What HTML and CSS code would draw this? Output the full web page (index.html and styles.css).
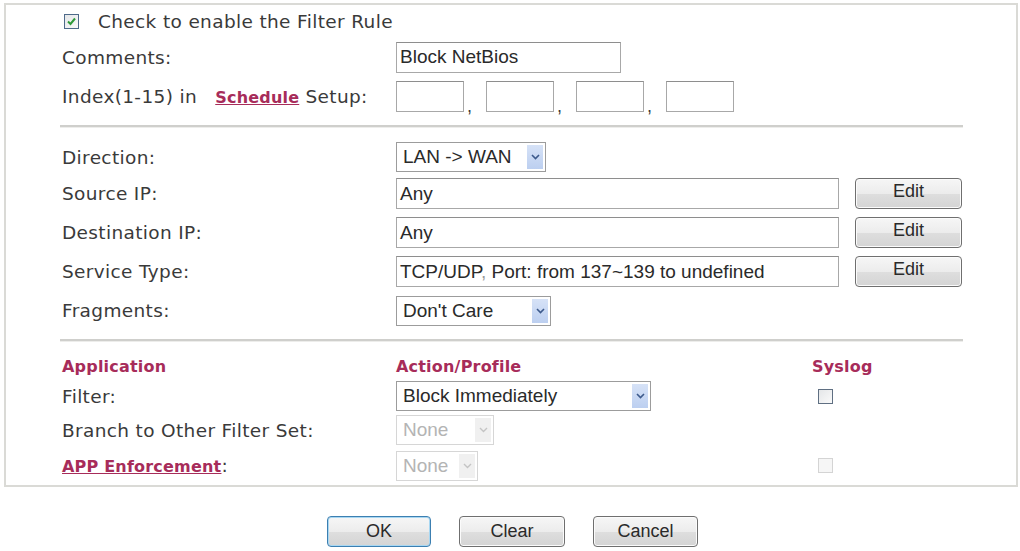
FILE: index.html
```html
<!DOCTYPE html>
<html lang="en">
  <head>
    <meta charset="UTF-8" />
    <title>Filter Rule</title>
    <link rel="stylesheet" href="styles.css">
  </head>
  <body>
    <div class="panel">
      <!-- enable + comments + schedule -->
      <div class="row row-check">
        <span class="checkbox checked">
          <svg width="11" height="11" viewBox="0 0 11 11"><path d="M2 5.5 L4.5 8 L9 2.5" fill="none" stroke="#2f9a3a" stroke-width="2"/></svg>
        </span>
        <span class="check-text">Check to enable the Filter Rule</span>
      </div>
      <div class="row row-comments">
        <div class="label">Comments:</div>
        <div class="field comments"><span>Block NetBios</span></div>
      </div>
      <div class="row row-index">
        <div class="label">Index(1-15) in <a class="link sched" href="#">Schedule</a> Setup:</div>
        <div class="index-set">
          <span class="field idx"></span><span class="comma">,</span>
          <span class="field idx"></span><span class="comma">,</span>
          <span class="field idx"></span><span class="comma">,</span>
          <span class="field idx"></span>
        </div>
      </div>

      <div class="sep sep-top"></div>

      <!-- rule matching -->
      <div class="row row-dir">
        <div class="label">Direction:</div>
        <div class="select sel-dir">
          <span class="sel-text">LAN -&gt; WAN</span>
          <span class="arrow"><svg width="9" height="6" viewBox="0 0 9 6"><path d="M1 1 L4.5 4.5 L8 1" fill="none" stroke="#3d5a8c" stroke-width="1.6"/></svg></span>
        </div>
      </div>
      <div class="row row-ip">
        <div class="label">Source IP:</div>
        <div class="field wide"><span>Any</span></div>
        <button class="btn edit">Edit</button>
      </div>
      <div class="row row-ip">
        <div class="label">Destination IP:</div>
        <div class="field wide"><span>Any</span></div>
        <button class="btn edit">Edit</button>
      </div>
      <div class="row row-ip">
        <div class="label">Service Type:</div>
        <div class="field wide"><span>TCP/UDP<span class="faint">,</span> Port: from 137~139 to undefined</span></div>
        <button class="btn edit">Edit</button>
      </div>
      <div class="row row-ip">
        <div class="label">Fragments:</div>
        <div class="select sel-frag">
          <span class="sel-text">Don't Care</span>
          <span class="arrow"><svg width="9" height="6" viewBox="0 0 9 6"><path d="M1 1 L4.5 4.5 L8 1" fill="none" stroke="#3d5a8c" stroke-width="1.6"/></svg></span>
        </div>
      </div>

      <div class="sep sep-bottom"></div>

      <!-- action -->
      <div class="row row-head">
        <div class="label head">Application</div>
        <div class="col-action head">Action/Profile</div>
        <div class="head">Syslog</div>
      </div>
      <div class="row row-filter">
        <div class="label">Filter:</div>
        <div class="col-action">
          <div class="select sel-action">
            <span class="sel-text">Block Immediately</span>
            <span class="arrow"><svg width="9" height="6" viewBox="0 0 9 6"><path d="M1 1 L4.5 4.5 L8 1" fill="none" stroke="#3d5a8c" stroke-width="1.6"/></svg></span>
          </div>
        </div>
        <span class="checkbox syslog"></span>
      </div>
      <div class="row row-branch">
        <div class="label">Branch to Other Filter Set:</div>
        <div class="col-action">
          <div class="select disabled sel-branch">
            <span class="sel-text">None</span>
            <span class="arrow"><svg width="9" height="6" viewBox="0 0 9 6"><path d="M1 1 L4.5 4.5 L8 1" fill="none" stroke="#c4c4c4" stroke-width="1.4"/></svg></span>
          </div>
        </div>
      </div>
      <div class="row row-app">
        <div class="label"><a class="link" href="#">APP Enforcement</a>:</div>
        <div class="col-action">
          <div class="select disabled sel-app">
            <span class="sel-text">None</span>
            <span class="arrow"><svg width="9" height="6" viewBox="0 0 9 6"><path d="M1 1 L4.5 4.5 L8 1" fill="none" stroke="#c4c4c4" stroke-width="1.4"/></svg></span>
          </div>
        </div>
        <span class="checkbox syslog disabled"></span>
      </div>
    </div>

    <div class="actions">
      <button class="btn big ok">OK</button>
      <button class="btn big clear">Clear</button>
      <button class="btn big cancel">Cancel</button>
    </div>
  </body>
</html>
```

FILE: styles.css
```css
* {
  box-sizing: border-box;
}

body {
  margin: 0;
  background: #fff;
  font-family: "DejaVu Sans", Verdana, sans-serif;
  font-size: 18.5px;
  letter-spacing: 0.35px;
  color: #3a3a3a;
}

.panel {
  margin: 3px 2px 0 4px;
  border: 2px solid #dadad6;
  padding: 0 53px 2px 56px;
}

.row {
  display: flex;
  align-items: center;
}

.label {
  width: 334px;
  flex: none;
  white-space: nowrap;
}

/* row heights */
.row-check { height: 32px; }
.row-comments { height: 40px; }
.row-index { height: 38px; }
.row-dir { height: 34px; }
.row-ip { height: 39px; }
.row-head { height: 28px; }
.row-filter { height: 32px; }
.row-branch { height: 36px; }
.row-app { height: 35px; }

.sep {
  margin-left: -2px;
  height: 3px;
  border-top: 2px solid #cfcfcc;
  border-bottom: 1px solid #ededeb;
}

.sep-top { margin-top: 10px; margin-bottom: 12px; }
.sep-bottom { margin-top: 9px; margin-bottom: 10px; }

.link {
  color: #a72c5a;
  font-weight: bold;
  text-decoration: underline;
  font-size: 16px;
  letter-spacing: 0.2px;
}

.sched {
  margin-left: 12px;
}

.head {
  color: #a72c5a;
  font-weight: bold;
  font-size: 16px;
  letter-spacing: 0.2px;
}

/* checkboxes */
.checkbox {
  display: inline-flex;
  align-items: center;
  justify-content: center;
  width: 15px;
  height: 15px;
  border: 1px solid #5f6f82;
  background: linear-gradient(135deg, #e4e6e8, #fafafa);
  flex: none;
}

.checkbox.checked {
  margin-left: 2px;
  border-color: #4e6a8a;
}

.check-text {
  margin-left: 19px;
}

.checkbox.syslog {
  margin-left: 6px;
}

.checkbox.disabled {
  border-color: #d4d4d4;
  background: #f6f6f6;
}

/* text fields */
.field {
  display: flex;
  align-items: center;
  height: 31px;
  border: 1px solid #a8a8a8;
  border-top-color: #8e8e8e;
  padding-left: 3px;
  font-family: "Liberation Sans", Arial, sans-serif;
  font-size: 19px;
  letter-spacing: 0;
  color: #2a2a2a;
  white-space: nowrap;
}

.comments {
  width: 225px;
}

.index-set {
  display: flex;
  align-items: flex-end;
}

.idx {
  width: 68px;
}

.comma {
  width: 22px;
  padding-left: 3px;
  font-family: "Liberation Sans", Arial, sans-serif;
  font-size: 18px;
  line-height: 18px;
  margin-bottom: -3px;
}

.wide {
  width: 443px;
}

.faint {
  color: #9a9a9a;
}

/* drop downs */
.select {
  display: flex;
  align-items: center;
  justify-content: space-between;
  height: 30px;
  border: 1px solid #9c9c9c;
  padding: 2px 2px 2px 6px;
  font-family: "Liberation Sans", Arial, sans-serif;
  font-size: 19px;
  letter-spacing: 0;
  color: #2a2a2a;
  white-space: nowrap;
}

.select .arrow {
  display: flex;
  align-items: center;
  justify-content: center;
  width: 16px;
  height: 100%;
  background: linear-gradient(#d6e2f7, #bccff0);
}

.sel-dir { width: 150px; }
.sel-frag { width: 155px; }
.sel-action { width: 255px; }
.sel-branch { width: 98px; }
.sel-app { width: 82px; }

.select.disabled {
  border-color: #d6d6d6;
  color: #b4b4b4;
}

.select.disabled .arrow {
  background: #f0f0f0;
}

.col-action {
  width: 416px;
  flex: none;
}

/* buttons */
.btn {
  font-family: "Liberation Sans", Arial, sans-serif;
  font-size: 18px;
  letter-spacing: 0;
  color: #2a2a2a;
  border: 1px solid #6f6f6f;
  border-radius: 4px;
  background: linear-gradient(#f6f6f6 0%, #ececec 50%, #dedede 51%, #d4d4d4 100%);
  box-shadow: inset 0 0 0 1px #fbfbfb;
  padding: 0;
  cursor: pointer;
}

.edit {
  width: 107px;
  height: 31px;
  margin-left: 16px;
  padding-bottom: 4px;
}

.actions {
  display: flex;
  justify-content: center;
  gap: 28px;
  margin-top: 29px;
  padding-left: 5px;
}

.big {
  height: 31px;
}

.ok {
  width: 104px;
  border-color: #3c7fb1;
  box-shadow: inset 0 0 0 1px #a8d7f2;
}

.clear { width: 106px; }
.cancel { width: 105px; }
```
